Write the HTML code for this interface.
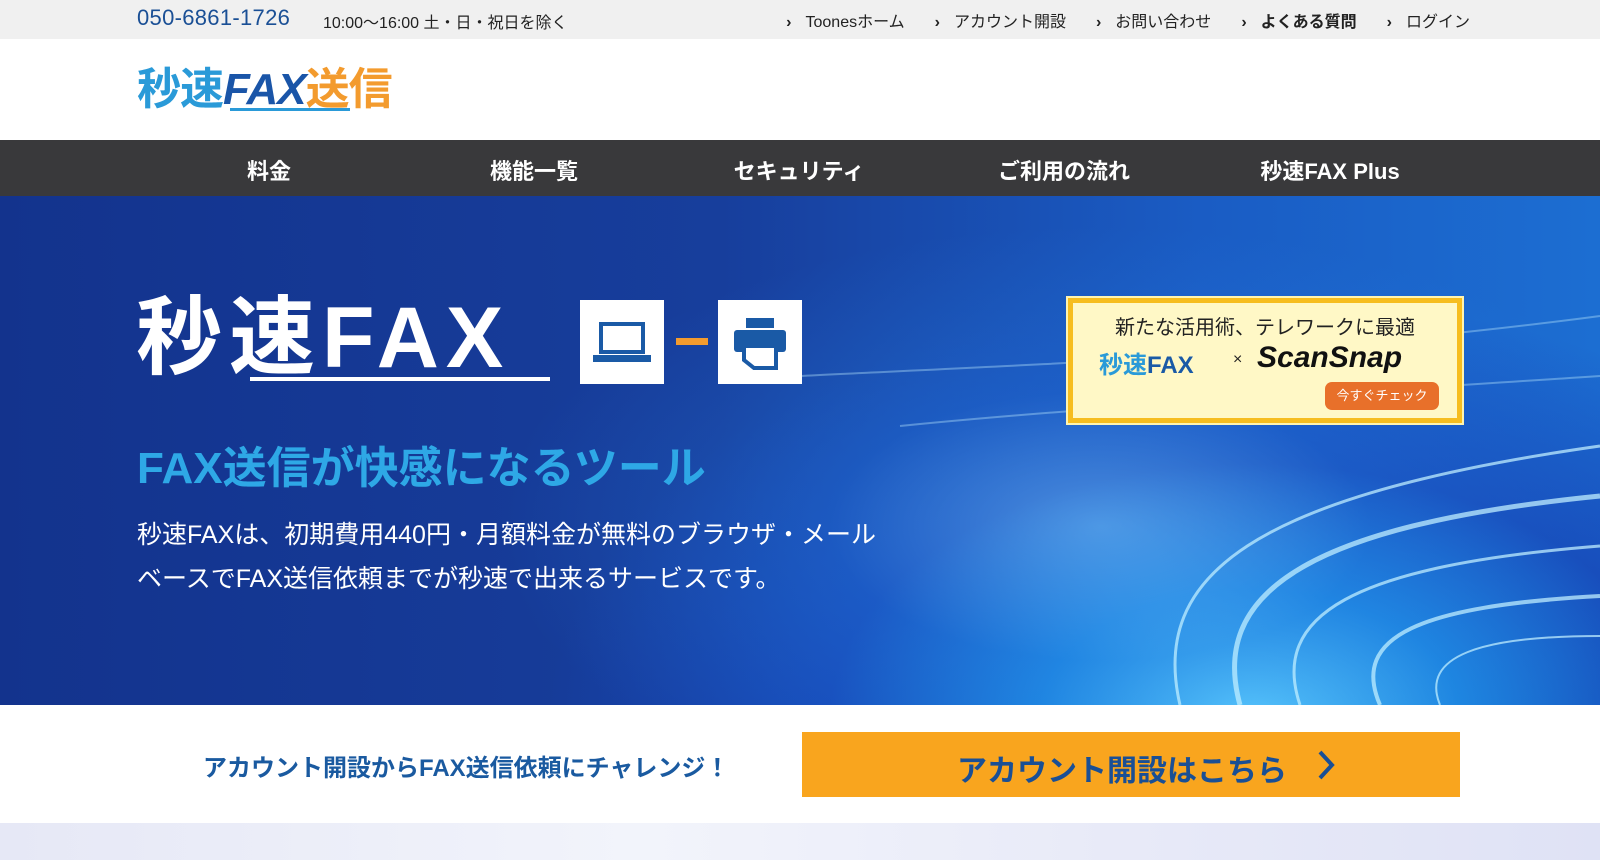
<!DOCTYPE html>
<html><head><meta charset="utf-8"><style>
*{margin:0;padding:0;box-sizing:border-box}
body{width:1600px;height:860px;overflow:hidden;font-family:"Liberation Sans","Noto Sans CJK JP",sans-serif;background:#fff;position:relative}
.abs{position:absolute}
.top{left:0;top:0;width:1600px;height:39px;background:#f0f0f0}
.phone{left:137px;top:5px;font-size:22px;color:#1a4f95;letter-spacing:.3px}
.hours{left:323px;top:9px;font-size:16px;color:#222}
.links{right:130px;top:8px;font-size:16px;color:#222;white-space:nowrap}
.links span{margin-left:30px}
.links b{margin-right:14px;font-weight:bold}
.nav{left:0;top:140px;width:1600px;height:56px;background:#39393b}
.nav div{position:absolute;top:14px;font-size:22px;font-weight:bold;color:#fff;transform:translateX(-50%);white-space:nowrap}
.hero{left:0;top:196px;width:1600px;height:509px;overflow:hidden;
background:radial-gradient(ellipse 600px 300px at 1100px 330px,rgba(120,200,255,.55) 0%,rgba(40,130,230,.3) 45%,rgba(20,60,170,0) 100%),radial-gradient(ellipse 700px 420px at 1250px 520px,#5fd0ff 0%,#1d86e0 30%,#1649b8 60%,rgba(20,50,150,0) 100%),linear-gradient(90deg,#13338d 0%,#173e9c 45%,#1a5cc4 75%,#1c6ed2 100%)}
.cta{left:0;top:705px;width:1600px;height:118px;background:#fff}
.bot{left:0;top:823px;width:1600px;height:37px;background:linear-gradient(90deg,#e6e8f6,#f2f4fb 40%,#e8eaf8 70%,#dfe2f5)}
</style></head><body>
<div class="abs top"></div>
<div class="abs phone">050-6861-1726</div>
<div class="abs hours">10:00～16:00 土・日・祝日を除く</div>
<div class="abs links"><span><b>›</b>Toonesホーム</span><span><b>›</b>アカウント開設</span><span><b>›</b>お問い合わせ</span><span style="font-weight:bold"><b>›</b>よくある質問</span><span><b>›</b>ログイン</span></div>

<div class="abs" style="left:137px;top:60px;font-size:44px;font-weight:bold;letter-spacing:-1px;white-space:nowrap;line-height:60px">
<span style="color:#2a9ad8">秒速</span><span style="color:#1a55a8;font-style:italic">FAX</span><span style="color:#f39b2e">送信</span></div>
<div class="abs" style="left:230px;top:108px;width:120px;height:3px;background:#2a9ad8"></div>

<div class="abs nav">
<div style="left:269px">料金</div><div style="left:534px">機能一覧</div><div style="left:799px">セキュリティ</div><div style="left:1064px">ご利用の流れ</div><div style="left:1330px">秒速FAX Plus</div>
</div>

<div class="abs hero">
<svg class="abs" style="left:0;top:0" width="1600" height="509">
<g fill="none" stroke="#bfeeff" opacity=".75">
<path d="M1180 509 C1150 380 1250 300 1600 250" stroke-width="3"/>
<path d="M1240 509 C1210 400 1300 330 1600 300" stroke-width="5"/>
<path d="M1300 509 C1270 420 1350 370 1600 350" stroke-width="3"/>
<path d="M1380 509 C1350 440 1420 410 1600 400" stroke-width="4"/>
<path d="M1440 509 C1420 460 1480 440 1600 440" stroke-width="2"/>
<path d="M800 180 C1000 170 1300 160 1600 120" stroke-width="2" opacity=".5"/>
<path d="M900 230 C1100 210 1300 200 1600 180" stroke-width="2" opacity=".5"/>
</g>
</svg>
<div class="abs" style="left:136px;top:96px;font-size:86px;font-weight:bold;color:#fff;line-height:92px;white-space:nowrap;letter-spacing:7px">秒速FAX</div>
<div class="abs" style="left:250px;top:181px;width:300px;height:4px;background:#fff"></div>
<div class="abs" style="left:580px;top:104px;width:84px;height:84px;background:#fff">
<svg width="84" height="84"><rect x="21" y="24" width="42" height="28" fill="none" stroke="#1a5aa6" stroke-width="4"/><rect x="13" y="55" width="58" height="7" fill="#1a5aa6"/></svg></div>
<div class="abs" style="left:676px;top:142px;width:32px;height:7px;background:#f39b2e"></div>
<div class="abs" style="left:718px;top:104px;width:84px;height:84px;background:#fff">
<svg width="84" height="84"><rect x="28" y="18" width="28" height="10" fill="#1a5aa6"/><rect x="16" y="30" width="52" height="22" rx="3" fill="#1a5aa6"/><path d="M26 46 h32 v22 h-22 l-10 -8z" fill="#fff" stroke="#1a5aa6" stroke-width="4"/></svg></div>
<div class="abs" style="left:137px;top:236px;font-size:44px;color:#2ea8e6;font-weight:bold;white-space:nowrap">FAX送信が快感になるツール</div>
<div class="abs" style="left:137px;top:317px;font-size:25px;color:#fff;line-height:44px;white-space:nowrap">秒速FAXは、初期費用440円・月額料金が無料のブラウザ・メール<br>ベースでFAX送信依頼までが秒速で出来るサービスです。</div>
<div class="abs" style="left:1068px;top:102px;width:394px;height:125px;background:#fff8c6;border:5px solid #f6bd1f;outline:2px solid #fff4b0">
<div class="abs" style="left:0;width:384px;top:8px;text-align:center;font-size:20px;color:#222">新たな活用術、テレワークに最適</div>
<div class="abs" style="left:26px;top:42px;font-size:24px;font-weight:bold;color:#1a5aa6;white-space:nowrap"><span style="color:#2a9ad8">秒速</span>FAX</div>
<div class="abs" style="left:160px;top:48px;font-size:16px;color:#222">×</div>
<div class="abs" style="left:184px;top:38px;font-size:30px;font-weight:bold;font-style:italic;color:#111;white-space:nowrap">ScanSnap</div>
<div class="abs" style="left:252px;top:79px;width:114px;height:28px;background:#e8702a;border-radius:7px;color:#fff;font-size:13px;text-align:center;line-height:28px">今すぐチェック</div>
</div>
</div>

<div class="abs cta"></div>
<div class="abs" style="left:203px;top:748px;font-size:24px;font-weight:bold;color:#1a5aa0;white-space:nowrap">アカウント開設からFAX送信依頼にチャレンジ！</div>
<div class="abs" style="left:802px;top:732px;width:658px;height:65px;background:#f9a51e">
<div class="abs" style="left:155px;top:14px;font-size:30px;font-weight:bold;color:#1a4f95;white-space:nowrap">アカウント開設はこちら</div>
<svg class="abs" style="left:512px;top:17px" width="24" height="32"><path d="M6 3 L18 16 L6 29" fill="none" stroke="#1a4f95" stroke-width="4"/></svg>
</div>
<div class="abs bot"></div>
</body></html>
